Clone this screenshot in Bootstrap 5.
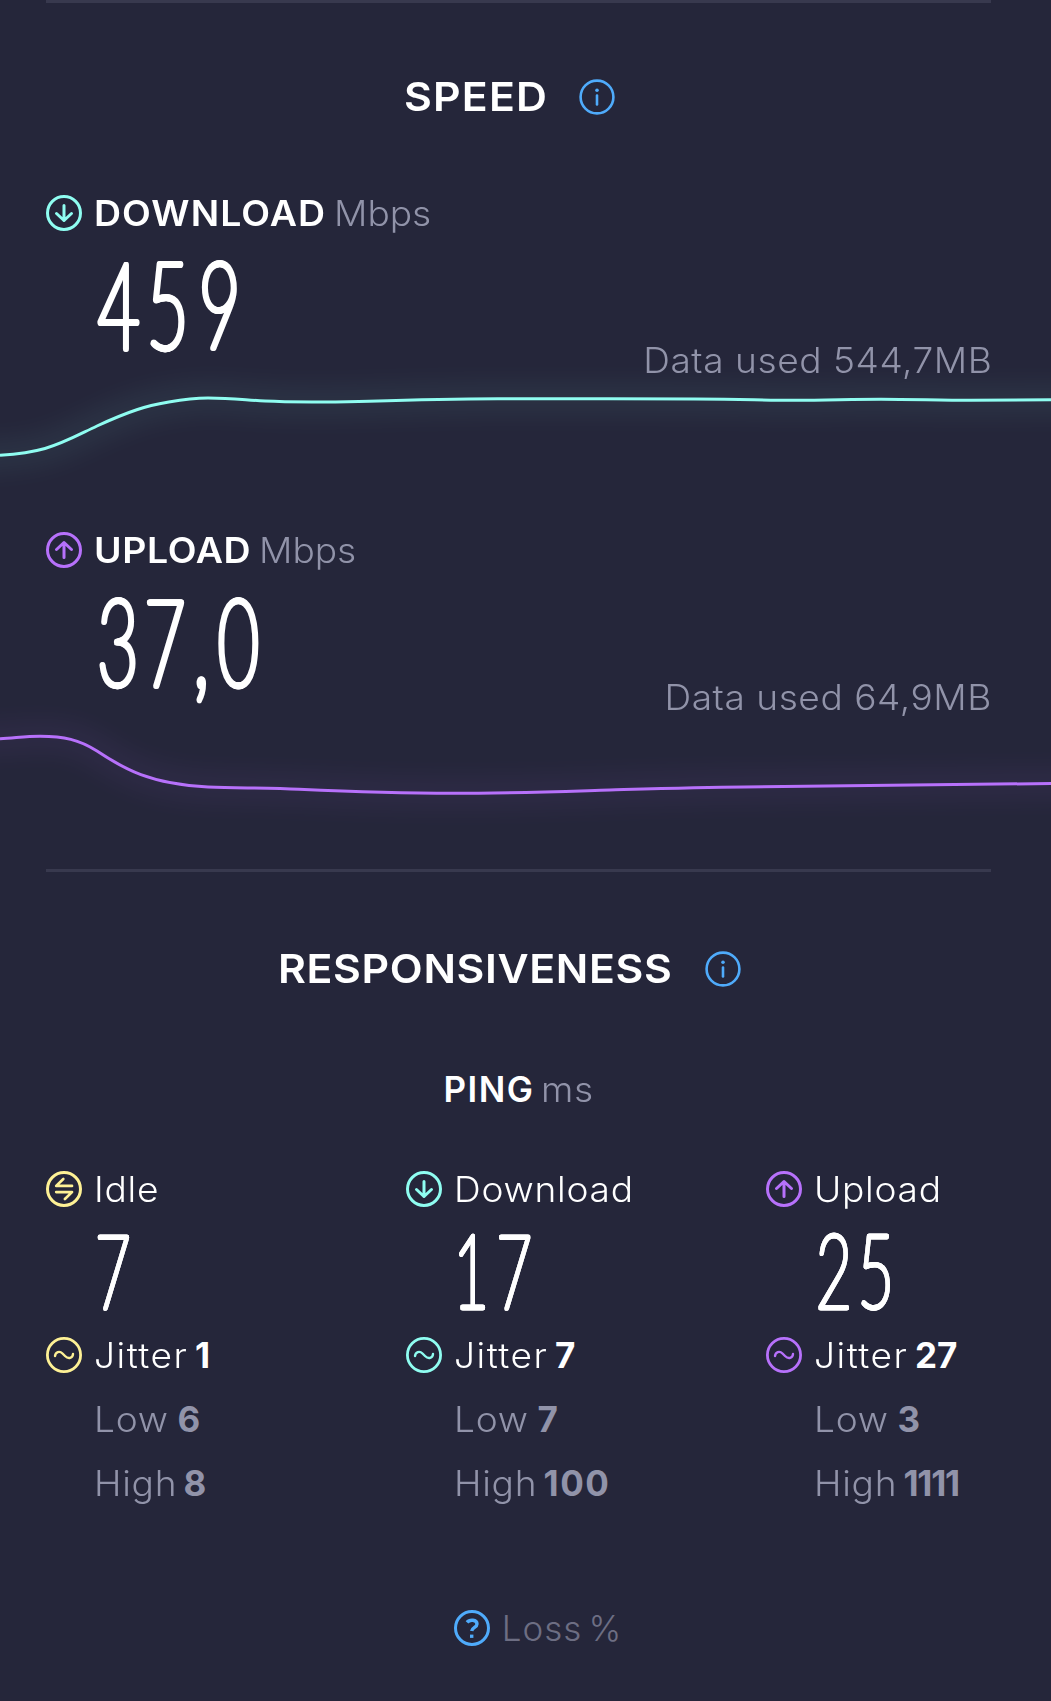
<!DOCTYPE html>
<html lang="en">
<head>
<meta charset="utf-8">
<meta name="viewport" content="width=device-width, initial-scale=1">
<title>Speed test result</title>
<link href="https://cdn.jsdelivr.net/npm/bootstrap@5.3.0/dist/css/bootstrap.min.css" rel="stylesheet">
<style>
  :root { --down: #8ffdf1; --up: #b771fb; --idle: #fef195; --info: #4fabfb; --dim: #9193a9; }
  body { background: #25263a; color: #fff; font: 330 35px/40px Inter, "Liberation Sans", sans-serif; font-kerning: normal; }
  b { font-weight: 700; }
  .screen { width: 1051px; height: 1701px; overflow: hidden; }
  .inset { margin-left: 46px; margin-right: 60px; }
  .rule { height: 3px; background: #38394e; }
  .title { font-size: 40px; font-weight: 600; line-height: 48px; gap: 31px; padding-right: 18px; }
  .title-top { margin-top: 70px; margin-bottom: 72px; }
  .title-mid { margin-top: 73px; margin-bottom: 76px; }
  .line { height: 40px; white-space: nowrap; gap: 12px; }
  .pair { gap: 6px; }
  .semi { font-weight: 600; }
  .dim { color: var(--dim); }
  .faint { color: #6d6e83; }
  .down { color: var(--down); } .up { color: var(--up); } .idle { color: var(--idle); } .info { color: var(--info); }
  .ico { width: 36px; height: 36px; flex: none; fill: none; stroke: currentColor; stroke-width: 3; stroke-linecap: round; stroke-linejoin: round; }
  /* Wide letterforms: stretched glyphs, with the extra width given back as margin */
  .wide, .wide-caps { transform: scaleX(1.06); transform-origin: left; letter-spacing: .7px; }
  .wide-caps { transform: scaleX(1.07); }
  .w-speed { letter-spacing: 1.1px; margin-right: 10px; }
  .w-resp { letter-spacing: .6px; margin-right: 28px; }
  .w-down { letter-spacing: 1px; margin-right: 17px; }
  .w-up { letter-spacing: .6px; margin-right: 12px; }
  .w-jitter { letter-spacing: 1.4px; margin-right: 6px; }
  .w-low { margin-right: 7px; }
  .w-high { margin-right: 5px; }
  .ls-n { letter-spacing: -1.3px; } .ls-0 { letter-spacing: 0; } .ls-1 { letter-spacing: 1px; } .ls-2 { letter-spacing: 1.5px; }
  .reading { height: 148px; padding-left: 48px; }
  .reading .used { letter-spacing: .5px; transform-origin: right; margin-right: -1px; padding-bottom: 1px; }
  .figure-num { display: block; overflow: visible; font-family: Lato, "Liberation Sans", sans-serif; font-weight: 100; fill: #fff; stroke: #fff; stroke-linejoin: round; filter: drop-shadow(1px 0 0 #fff) drop-shadow(-1px 0 0 #fff); }
  .big { font-size: 121px; stroke-width: 5.4px; }
  .mid { font-size: 103px; stroke-width: 4.4px; filter: drop-shadow(.8px 0 0 #fff) drop-shadow(-.8px 0 0 #fff); }
  .graph { display: block; width: 1051px; height: 149px; overflow: visible; fill: none; }
  .graph-last { height: 151px; }
  .graph .glow { stroke-width: 34; opacity: .05; filter: blur(11px); }
  .graph .trace { stroke-width: 3; }
  .ping { padding-right: 3px; }
  .stats { display: grid; grid-template-columns: 360px 360px 1fr; margin-top: 60px; }
  .stat-num { height: 126px; padding-left: 48px; }
  .sub { padding-left: 48px; margin-top: 24px; }
  .loss { margin-top: 105px; padding-left: 38px; }
</style>
</head>
<body>
<svg class="d-none" aria-hidden="true">
  <symbol id="i-down" viewBox="0 0 36 36"><circle cx="18" cy="18" r="16.5"/><path d="M18 10.5v15M10.5 18.5l7.5 7 7.5-7"/></symbol>
  <symbol id="i-up" viewBox="0 0 36 36"><circle cx="18" cy="18" r="16.5"/><path d="M18 25.5v-15M10.5 17.5l7.5-7 7.5 7"/></symbol>
  <symbol id="i-swap" viewBox="0 0 36 36"><circle cx="18" cy="18" r="16.5"/><path d="M26 14.9H10.2L17.3 8M10.2 21.1H26L18.9 28" stroke-width="2.7"/></symbol>
  <symbol id="i-wave" viewBox="0 0 36 36"><circle cx="18" cy="18" r="16.6" stroke-width="2.8"/><path d="M9 19C9.5 15 13.5 13.5 16.5 16.5L19 19C22.5 22.5 26.8 21 27 17" stroke-width="2.4"/></symbol>
  <symbol id="i-info" viewBox="0 0 36 36"><circle cx="18" cy="18" r="16.4" stroke-width="2.6"/><path d="M18 16.5v9" stroke-width="2.6"/><circle cx="18" cy="11.3" r="1.8" fill="currentColor" stroke="none"/></symbol>
  <symbol id="i-help" viewBox="0 0 36 36"><circle cx="18" cy="18" r="16.5"/><path d="M13 12.4C15.5 9.2 23 9.3 23 14C23 17.4 18.2 17.3 17.7 21" stroke-width="3.4" stroke-linecap="butt"/><path d="M16 24.6h3.4v3.3H16z" fill="currentColor" stroke="none"/></symbol>
</svg>

<main class="screen">
  <section>
    <div class="inset rule"></div>
    <h1 class="inset title title-top d-flex justify-content-center align-items-center"><span class="wide-caps w-speed">SPEED</span><svg class="ico info"><use href="#i-info"/></svg></h1>

    <div class="inset line d-flex align-items-center"><svg class="ico down"><use href="#i-down"/></svg><div class="d-flex pair"><span class="semi wide-caps w-down">DOWNLOAD</span><span class="dim wide ls-0">Mbps</span></div></div>
    <div class="inset reading d-flex justify-content-between">
      <svg class="figure-num big" width="160" height="120"><text transform="translate(0,115.5) scale(.59,1)" x="7 90 178">459</text></svg>
      <div class="used dim wide align-self-end">Data used 544,7MB</div>
    </div>
    <svg class="graph" viewBox="0 381 1051 149">
      <g stroke="#8ffdf1">
        <path class="glow" d="M-40 458L0 455.300C15 454.300 31 452.500 45 448.500C64 443 78 435 97 426C111 419.500 124 414 137.500 409.500S184 398 208 398S245 400 265 401S335 402.500 369 401.300S460 398.600 503 398.700S640 398.700 695 399S760 400.300 794 400.300S850 399.300 881 399.300S940 400.300 971 400.300L1051 399.700H1090"/>
        <path class="trace" d="M0 455.300C15 454.300 31 452.500 45 448.500C64 443 78 435 97 426C111 419.500 124 414 137.500 409.500S184 398 208 398S245 400 265 401S335 402.500 369 401.300S460 398.600 503 398.700S640 398.700 695 399S760 400.300 794 400.300S850 399.300 881 399.300S940 400.300 971 400.300L1051 399.700"/>
      </g>
    </svg>

    <div class="inset line d-flex align-items-center"><svg class="ico up"><use href="#i-up"/></svg><div class="d-flex pair"><span class="semi wide-caps w-up">UPLOAD</span><span class="dim wide ls-0">Mbps</span></div></div>
    <div class="inset reading d-flex justify-content-between">
      <svg class="figure-num big" width="180" height="120"><text transform="translate(0,115.5) scale(.58,1)" x="6 87 172 214">37,0</text></svg>
      <div class="used dim wide align-self-end">Data used 64,9MB</div>
    </div>
    <svg class="graph graph-last" viewBox="0 718 1051 151">
      <g stroke="#b771fb">
        <path class="glow" d="M-40 740L0 738.700C15 738 25 736.300 40 736.300C64 736.300 79 739.500 97 751C124 769 150 784 208 787C240 788 270 788 299 789.300S400 793.300 453 793.300S558 791.500 610 790S700 787.300 744 787S950 784.500 1051 783.500H1090"/>
        <path class="trace" d="M0 738.700C15 738 25 736.300 40 736.300C64 736.300 79 739.500 97 751C124 769 150 784 208 787C240 788 270 788 299 789.300S400 793.300 453 793.300S558 791.500 610 790S700 787.300 744 787S950 784.500 1051 783.500"/>
      </g>
    </svg>
  </section>

  <section>
    <div class="inset rule"></div>
    <h2 class="inset title title-mid d-flex justify-content-center align-items-center"><span class="wide-caps w-resp">RESPONSIVENESS</span><svg class="ico info"><use href="#i-info"/></svg></h2>
    <div class="inset ping d-flex justify-content-center pair"><span class="semi ls-2">PING</span><span class="dim wide">ms</span></div>

    <div class="inset stats">
      <div>
        <div class="line d-flex align-items-center"><svg class="ico idle"><use href="#i-swap"/></svg><span class="wide">Idle</span></div>
        <div class="stat-num"><svg class="figure-num mid" width="100" height="110"><text transform="translate(0,98.5) scale(.59,1)" x="3">7</text></svg></div>
        <div class="line d-flex align-items-center"><svg class="ico idle"><use href="#i-wave"/></svg><div class="d-flex pair"><span class="wide w-jitter">Jitter</span><b>1</b></div></div>
        <div class="sub dim d-flex pair"><span class="wide w-low">Low</span><b>6</b></div>
        <div class="sub dim d-flex pair"><span class="wide w-high">High</span><b>8</b></div>
      </div>
      <div>
        <div class="line d-flex align-items-center"><svg class="ico down"><use href="#i-down"/></svg><span class="wide">Download</span></div>
        <div class="stat-num"><svg class="figure-num mid" width="100" height="110"><text transform="translate(0,98.5) scale(.59,1)" x="0 73">17</text></svg></div>
        <div class="line d-flex align-items-center"><svg class="ico down"><use href="#i-wave"/></svg><div class="d-flex pair"><span class="wide w-jitter">Jitter</span><b>7</b></div></div>
        <div class="sub dim d-flex pair"><span class="wide w-low">Low</span><b>7</b></div>
        <div class="sub dim d-flex pair"><span class="wide w-high">High</span><b class="ls-2">100</b></div>
      </div>
      <div>
        <div class="line d-flex align-items-center"><svg class="ico up"><use href="#i-up"/></svg><span class="wide">Upload</span></div>
        <div class="stat-num"><svg class="figure-num mid" width="100" height="110"><text transform="translate(0,98.5) scale(.6,1)" x="4 74">25</text></svg></div>
        <div class="line d-flex align-items-center"><svg class="ico up"><use href="#i-wave"/></svg><div class="d-flex pair"><span class="wide w-jitter">Jitter</span><b>27</b></div></div>
        <div class="sub dim d-flex pair"><span class="wide w-low">Low</span><b>3</b></div>
        <div class="sub dim d-flex pair"><span class="wide w-high">High</span><b class="ls-n">1111</b></div>
      </div>
    </div>

    <div class="inset line loss d-flex justify-content-center align-items-center"><svg class="ico info"><use href="#i-help"/></svg><div class="faint d-flex pair"><span class="ls-1">Loss</span><span>%</span></div></div>
  </section>
</main>
<script src="https://cdn.jsdelivr.net/npm/bootstrap@5.3.0/dist/js/bootstrap.bundle.min.js"></script>
</body>
</html>
